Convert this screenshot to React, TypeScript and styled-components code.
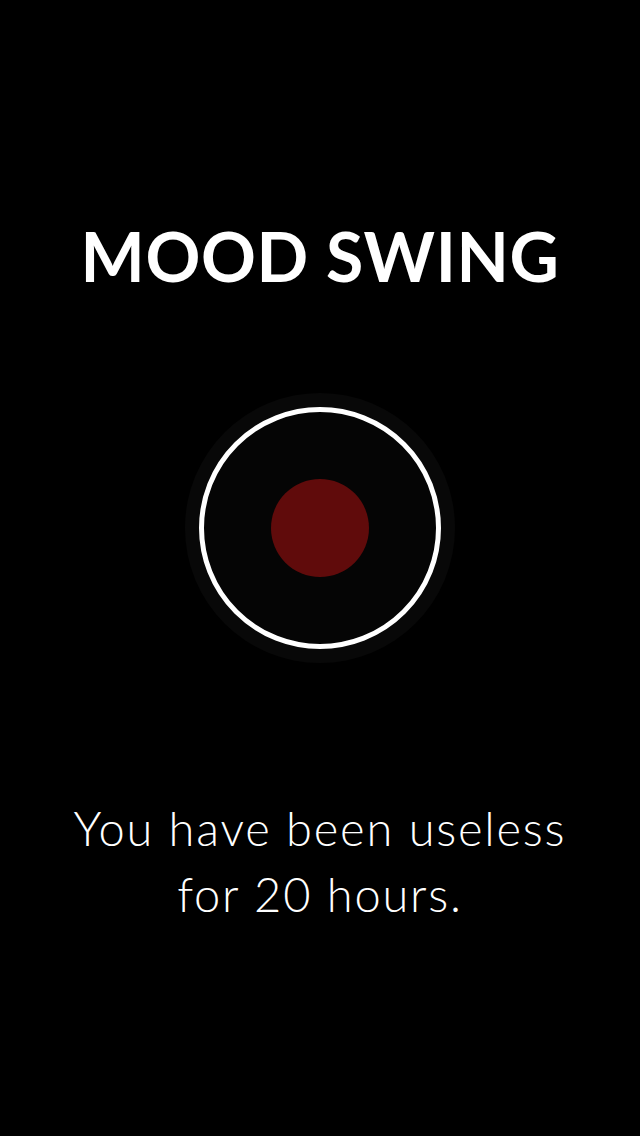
import styled, { createGlobalStyle } from "styled-components";

const GlobalStyle = createGlobalStyle`
  html, body {
    margin: 0;
    padding: 0;
    background: #000;
  }
`;

const Screen = styled.div`
  width: 640px;
  height: 1136px;
  background: #000;
  display: flex;
  flex-direction: column;
  align-items: center;
  font-family: Lato, "Open Sans", sans-serif;
  color: #fff;
`;

const Title = styled.h1`
  margin: 222px 0 0;
  font-size: 68px;
  line-height: 68px;
  font-weight: 700;
  letter-spacing: 0.6px;
`;

const Halo = styled.div`
  margin-top: 103px;
  width: 270px;
  height: 270px;
  border-radius: 50%;
  background: #080808;
  display: flex;
  align-items: center;
  justify-content: center;
`;

const Ring = styled.div`
  width: 232px;
  height: 232px;
  border-radius: 50%;
  border: 5px solid #fff;
  background: #050505;
  display: flex;
  align-items: center;
  justify-content: center;
`;

const Dot = styled.div<{ $color: string }>`
  width: 98px;
  height: 98px;
  border-radius: 50%;
  background: ${(p) => p.$color};
`;

const Message = styled.p`
  margin: 132px 0 0;
  font-size: 47px;
  line-height: 66px;
  font-weight: 300;
  text-align: center;
  letter-spacing: 1.8px;
`;

export default function App() {
  return (
    <>
      <GlobalStyle />
      <Screen>
        <Title>MOOD SWING</Title>
        <Halo>
          <Ring>
            <Dot $color="#600b0b" />
          </Ring>
        </Halo>
        <Message>
          You have been useless
          <br />
          for 20 hours.
        </Message>
      </Screen>
    </>
  );
}
